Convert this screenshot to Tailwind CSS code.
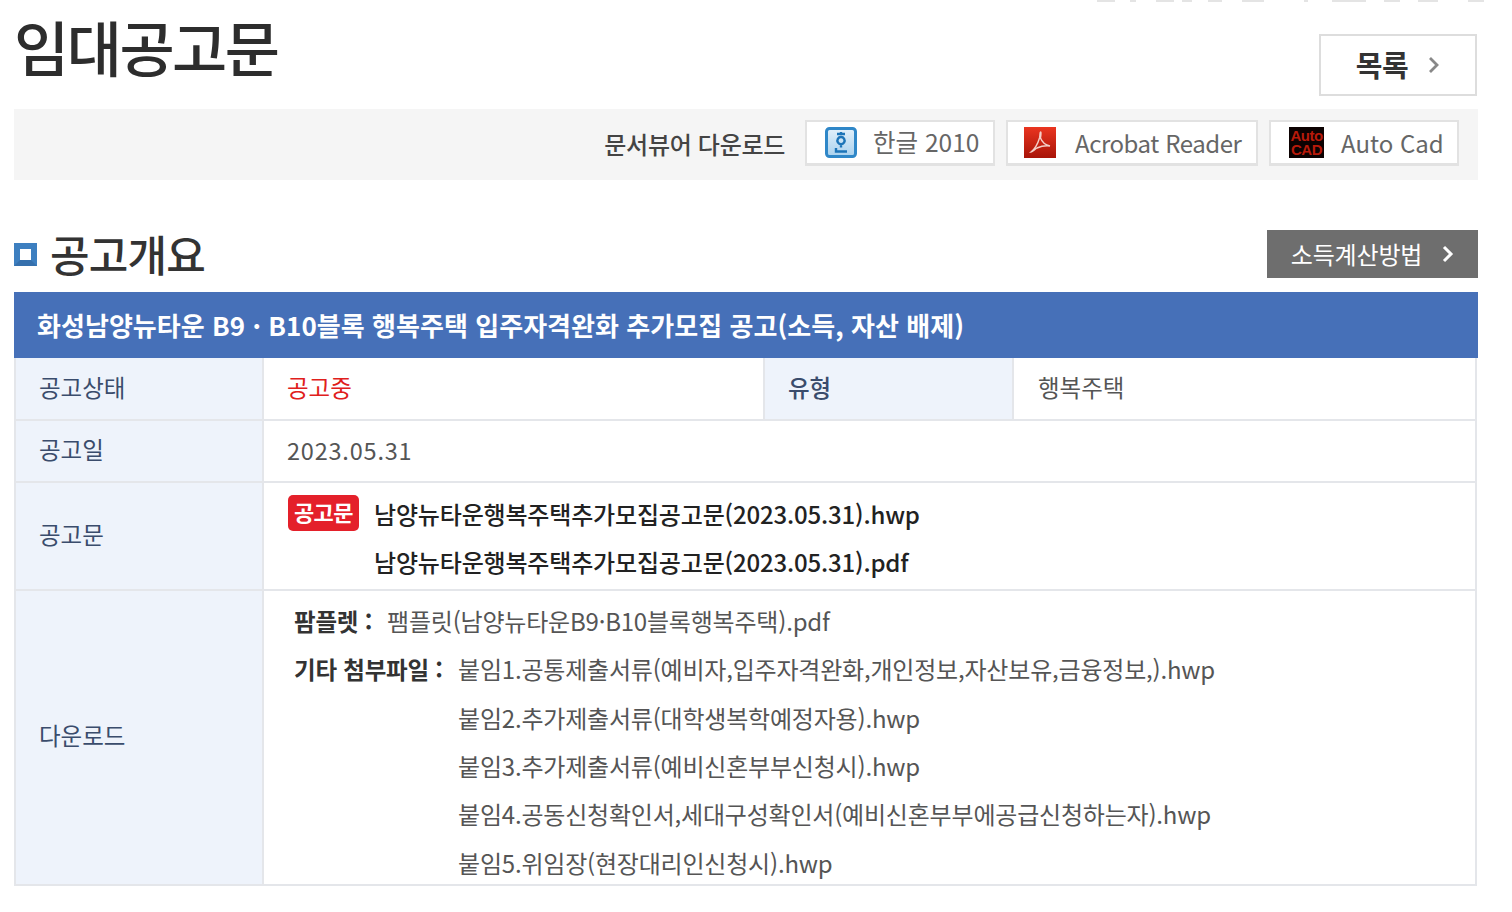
<!DOCTYPE html>
<html lang="ko">
<head>
  <meta charset="UTF-8" />
  <title>임대공고문</title>
  <script src="https://cdn.jsdelivr.net/npm/@tailwindcss/browser@4"></script>
</head>
<body class="relative bg-white text-[#555] h-[912px] overflow-hidden font-['Noto_Sans_CJK_KR','Noto_Sans',sans-serif]">
  <!-- bottom edge of the cut-off breadcrumb -->
  <div class="absolute top-0 left-[1097px] h-[2px] flex [&>i]:bg-[#e4e4e4] [&>i]:h-[2px]">
    <i class="w-[18px]"></i><i class="w-[6px] ml-[15px]"></i><i class="w-[18px] ml-[20px]"></i><i class="w-[10px] ml-[8px]"></i><i class="w-[14px] ml-[16px]"></i><i class="w-[22px] ml-[20px]"></i><i class="w-[4px] ml-[40px]"></i><i class="w-[34px] ml-[24px]"></i><i class="w-[16px] ml-[18px]"></i><i class="w-[20px] ml-[18px]"></i><i class="w-[16px] ml-[30px]"></i>
  </div>

  <div class="pl-[14px] pr-[34px]">
    <!-- Title -->
    <div class="flex justify-between h-[109px]">
      <h1 class="text-[60px] leading-[60px] pt-[16px] font-medium text-[#2d2d2d] tracking-[-2.5px]">임대공고문</h1>
      <a class="mt-[34px] mr-[1px] w-[158px] h-[62px] border-2 border-[#ddd] flex items-center justify-center gap-[20px] text-[29px] font-bold text-[#333] tracking-[-0.5px]">목록
        <svg width="12" height="18" viewBox="0 0 12 18" fill="none" stroke="#888" stroke-width="2.8"><path d="M2 2l7 7-7 7"/></svg>
      </a>
    </div>

    <!-- Viewer downloads -->
    <div class="h-[71px] bg-[#f5f5f5] flex items-start justify-end gap-[11px] pr-[19px] pt-[11px]">
      <span class="text-[24px] leading-[46px] pt-[1px] font-medium text-[#444] mr-[9px] tracking-[-0.3px]">문서뷰어 다운로드</span>
      <a class="w-[190px] h-[46px] bg-white border-2 border-[#e2e2e2] border-b-[3px] flex items-center pl-[18px] gap-[16px] text-[24.5px] text-[#666]">
        <svg width="32" height="31" viewBox="0 0 32 31"><defs><linearGradient id="hg" x1="0" y1="0" x2="0" y2="1"><stop offset="0" stop-color="#e2f0fa"/><stop offset="1" stop-color="#a9d1ee"/></linearGradient></defs><rect x="1.500" y="1.500" width="29" height="28" rx="3" fill="url(#hg)" stroke="#2f87c8" stroke-width="3"/><path d="M12 7h8M16 5v2M16 10a3.600 3.600 0 1 0 .01 0M16 17.500v3M11 21v3.500h11" fill="none" stroke="#1c74b8" stroke-width="2.400"/></svg>
        한글 2010
      </a>
      <a class="w-[252px] h-[46px] bg-white border-2 border-[#e2e2e2] border-b-[3px] flex items-center pl-[16px] gap-[19px] text-[24px] tracking-[-0.45px] text-[#666]">
        <svg width="32" height="31" viewBox="0 0 32 31"><defs><linearGradient id="pd" x1="0" y1="0" x2="0" y2="1"><stop offset="0" stop-color="#ea3520"/><stop offset="1" stop-color="#a81408"/></linearGradient></defs><rect width="32" height="31" fill="url(#pd)"/><path d="M7 25c4-3 7-9 8.500-14 .8-3 .2-6 1-6s.4 3 0 6c1.500 4 5 7 9.500 8-5-.6-9 .2-13 2-2.500 1.400-4 4-6 4z" fill="none" stroke="#f4cfc8" stroke-width="1.400"/></svg>
        Acrobat Reader
      </a>
      <a class="w-[190px] h-[46px] bg-white border-2 border-[#e2e2e2] border-b-[3px] flex items-center pl-[18px] gap-[17px] text-[24px] text-[#666]">
        <span class="w-[35px] h-[31px] bg-[#0c0202] text-[#b81a0a] text-[15px] leading-[14px] font-bold tracking-[-0.5px] flex flex-col items-center justify-center font-['Liberation_Sans',sans-serif]"><span>Auto</span><span>CAD</span></span>
        Auto Cad
      </a>
    </div>

    <!-- Section heading -->
    <div class="flex justify-between items-start mt-[50px] h-[49px]">
      <div class="flex items-center gap-[13px] h-[49px]">
        <span class="w-[23px] h-[23px] border-[6px] border-[#3d7fc0] border-b-[#3570ad] bg-white"></span>
        <h2 class="text-[43px] leading-[46px] pb-[3px] font-medium text-[#333] tracking-[-0.8px]">공고개요</h2>
      </div>
      <a class="w-[211px] h-[48px] bg-[#6e6e6e] text-white text-[24px] tracking-[-0.2px] flex items-center justify-center gap-[20px] pb-[1px]">소득계산방법
        <svg width="12" height="18" viewBox="0 0 12 18" fill="none" stroke="#fff" stroke-width="3"><path d="M2 2l7 7-7 7"/></svg>
      </a>
    </div>

    <!-- Title bar -->
    <div class="mt-[13px] h-[66px] bg-[#4670b8] text-white text-[26px] tracking-[0.04px] font-bold flex items-center pl-[23px] pb-[2px]">화성남양뉴타운 B9 · B10블록 행복주택 입주자격완화 추가모집 공고(소득, 자산 배제)</div>

    <!-- Details table -->
    <div class="border-x-2 border-b-2 border-[#e4e6ea] mr-[1px] text-[23.5px] leading-[30px]">
      <div class="flex h-[63px] border-b-2 border-[#e4e6ea]">
        <div class="w-[248px] bg-[#eef3fb] border-r-2 border-[#e4e6ea] text-[#3a4c6c] pl-[23px] pb-[4px] flex items-center">공고상태</div>
        <div class="w-[501px] border-r-2 border-[#e4e6ea] pl-[23px] pb-[4px] text-[#e0201c] flex items-center">공고중</div>
        <div class="w-[249px] bg-[#eef3fb] border-r-2 border-[#e4e6ea] text-[#3a4c6c] font-medium pl-[23px] pb-[4px] flex items-center">유형</div>
        <div class="flex-1 pl-[24px] pb-[4px] flex items-center">행복주택</div>
      </div>
      <div class="flex h-[62px] border-b-2 border-[#e4e6ea]">
        <div class="w-[248px] bg-[#eef3fb] border-r-2 border-[#e4e6ea] text-[#3a4c6c] pl-[23px] pb-[4px] flex items-center">공고일</div>
        <div class="flex-1 pl-[23px] pb-[3px] tracking-[0.8px] flex items-center">2023.05.31</div>
      </div>
      <div class="flex h-[108px] border-b-2 border-[#e4e6ea]">
        <div class="w-[248px] bg-[#eef3fb] border-r-2 border-[#e4e6ea] text-[#3a4c6c] pl-[23px] pb-[5px] flex items-center">공고문</div>
        <div class="flex-1 pl-[24px] pt-[7px] text-[#222] font-medium text-[24px] tracking-[-0.17px]">
          <div class="flex items-center h-[48px]">
            <span class="w-[71px] h-[36px] -mt-[3px] mr-[15px] bg-[#e4202a] rounded-[5px] text-white text-[22px] tracking-[-0.5px] font-bold flex items-center justify-center pb-[3px]">공고문</span>
            남양뉴타운행복주택추가모집공고문(2023.05.31).hwp
          </div>
          <div class="flex items-center h-[48px] pl-[86px]">남양뉴타운행복주택추가모집공고문(2023.05.31).pdf</div>
        </div>
      </div>
      <div class="flex h-[293px]">
        <div class="w-[248px] bg-[#eef3fb] border-r-2 border-[#e4e6ea] text-[#3a4c6c] pl-[23px] pb-[6px] flex items-center">다운로드</div>
        <div class="flex-1 pl-[30px] pt-[6px] text-[24px] tracking-[-0.2px]">
          <div class="flex items-center h-[48px]"><b class="font-bold text-[23.5px] text-[#333] w-[93px]">팜플렛 :</b>팸플릿(남양뉴타운B9·B10블록행복주택).pdf</div>
          <div class="flex">
            <b class="font-bold text-[23.5px] text-[#333] w-[164px] h-[48px] flex items-center">기타 첨부파일 :</b>
            <div class="[&>div]:h-[48.4px] [&>div]:flex [&>div]:items-center">
              <div>붙임1.공통제출서류(예비자,입주자격완화,개인정보,자산보유,금융정보,).hwp</div>
              <div>붙임2.추가제출서류(대학생복학예정자용).hwp</div>
              <div>붙임3.추가제출서류(예비신혼부부신청시).hwp</div>
              <div>붙임4.공동신청확인서,세대구성확인서(예비신혼부부에공급신청하는자).hwp</div>
              <div>붙임5.위임장(현장대리인신청시).hwp</div>
            </div>
          </div>
        </div>
      </div>
    </div>
  </div>
</body>
</html>
